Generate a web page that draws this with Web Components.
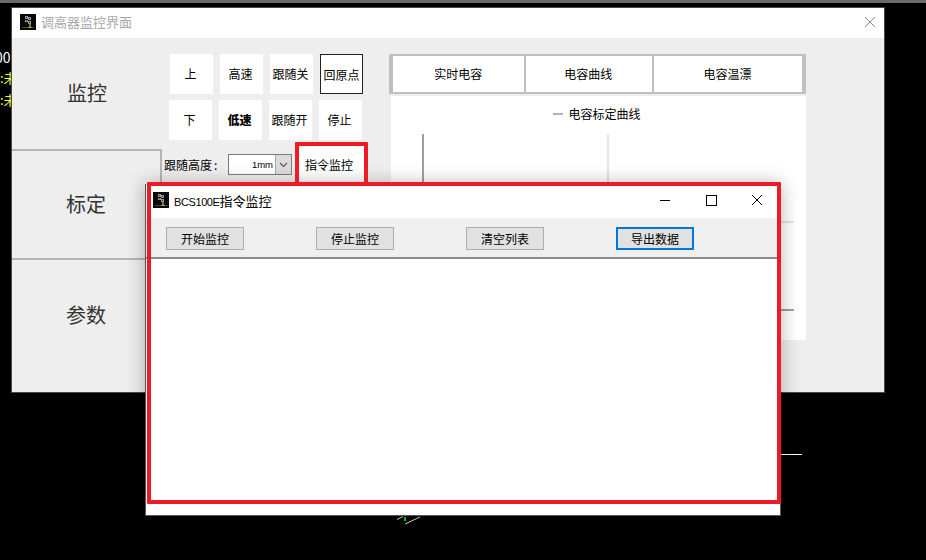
<!DOCTYPE html>
<html lang="zh-CN">
<head>
<meta charset="utf-8">
<title>调高器监控界面</title>
<style>
html,body{margin:0;padding:0;background:#000;}
body{font:12px "Noto Sans CJK SC","Liberation Sans",sans-serif;color:#000;width:926px;height:560px;overflow:hidden;}
</style>
</head>
<body>
<desk-top>
  <app-window>
    <side-nav slot="nav"></side-nav>
    <control-panel slot="controls"></control-panel>
    <chart-panel slot="chart"></chart-panel>
  </app-window>
  <monitor-dialog></monitor-dialog>
  <red-mark style="left:295px;top:142px;width:73px;height:44px"></red-mark>
  <red-mark style="left:147px;top:182px;width:634px;height:322px"></red-mark>
</desk-top>
<script>
const FONT='"Noto Sans CJK SC","Liberation Sans",sans-serif';
function def(name,html){
  customElements.define(name,class extends HTMLElement{
    constructor(){super();this.attachShadow({mode:'open'}).innerHTML=html;}
  });
}
def('app-icon',`<style>:host{display:block;width:16px;height:16px;flex:none}svg{display:block}</style>
<svg width="16" height="16" viewBox="0 0 16 16" shape-rendering="crispEdges"><rect width="16" height="16" fill="#0a0a0a"/>
<path d="M5 2h3v3H5zM8 3h3v3H8zM5 6h3v2H5zM8 7h3v3H8z" fill="#9a9a9a"/>
<path d="M6 3h1v1H6zM9 4h1v1H9zM6 6h1v1H6zM9 8h1v1H9z" fill="#2a2a2a"/>
<path d="M9 10h2v3H9z" fill="#77773a"/>
<path d="M2 13h12v1H2z" fill="#4a4a28"/>
<path d="M8 13h4v1H8z" fill="#a8a030"/></svg>`);

def('desk-top',`<style>
:host{display:block;position:relative;width:926px;height:560px;background:#000;overflow:hidden}
.top{height:3px;background:#6a6a6a}
.strip{position:absolute;left:0;top:46px;width:11px;overflow:hidden;display:flex;flex-direction:column;font:14px/22px ${FONT};color:#fff;white-space:nowrap}
.w{margin-left:-5px}
.y{color:#f4f430;font-size:13px}
.y1{margin-top:-1px}
svg{position:absolute;left:0;top:0}
</style>
<div class="top"></div>
<div class="strip"><span class="w">00</span><span class="y y1">:未</span><span class="y">:未</span></div>
<svg width="926" height="560" fill="none">
<path d="M781 454.5h21" stroke="#fff"/>
<path d="M397 519.5l6-3M405 524l15-7" stroke="#ddd"/>
<path d="M405 517v4" stroke="#0c0" stroke-width="2"/>
</svg>
<slot></slot>`);

def('app-window',`<style>
:host{display:block;position:absolute;left:11px;top:7px;width:872px;height:384px;border:1px solid #4a4a4a;background:#eee;font:12px ${FONT}}
.title{height:30px;box-sizing:border-box;padding:0 8px 2px 8px;background:#fff;display:flex;align-items:center;gap:5px;color:#a8a8a8;font-size:13px}
.title span{flex:1;position:relative;top:-1px}
.body{height:354px;display:grid;grid-template-columns:150px 227px 417px 1fr}
svg{display:block}
</style>
<div class="title"><app-icon></app-icon><span>调高器监控界面</span>
<svg width="12" height="12" viewBox="0 0 12 12" fill="none" stroke="#8a8a8a"><path d="M1 1l10 10M11 1L1 11"/></svg></div>
<div class="body"><slot name="nav"></slot><slot name="controls"></slot><slot name="chart"></slot><div></div></div>`);

def('side-nav',`<style>
:host{display:grid;grid-template-rows:111px 109px 134px;height:354px;font:20px ${FONT};color:#333}
div{display:flex;align-items:center;justify-content:center;box-sizing:border-box;padding-bottom:2px}
.b{border-top:2px solid #b5b5b5;border-right:2px solid #b5b5b5}
.l{padding-bottom:23px}
</style>
<div>监控</div><div class="b">标定</div><div class="b l">参数</div>`);

def('tool-btn',`<style>
:host{display:flex;align-items:center;justify-content:center;box-sizing:border-box;width:43px;height:40px;padding:0 2px 1px 0;background:#fff;font:12px ${FONT};color:#000;white-space:nowrap}
:host([active]){border:1.5px solid #222;padding:0}
:host([strong]){font-weight:900}
:host(.cmd){padding:2px 4px 0 0}
</style><slot></slot>`);

def('control-panel',`<style>
:host{display:block;padding:16px 0 0 8px;box-sizing:border-box;font:12px ${FONT}}
.row{display:flex;gap:7px}
.r2{margin:6px 0 0 -1px}
.r3{margin:5px 0 0 -6px;display:flex;align-items:flex-start}
.r3 label{width:64px;margin-top:10px;line-height:20px}
.r3 label b{font-weight:400;margin-left:2px}
.sel{width:64px;height:21px;margin-top:9px;box-sizing:border-box;border:1px solid #7a7a7a;background:#fff;display:flex;font:9.5px/19px "Liberation Sans",sans-serif}
.sel span{flex:1;text-align:right;padding-right:2px}
.sel i{width:15px;background:#dcdcdc;border-left:1px solid #a8a8a8;display:flex;align-items:center;justify-content:center}
.cmd{width:66px;height:35px;margin:1px 0 0 6px}
</style>
<div class="row"><tool-btn>上</tool-btn><tool-btn>高速</tool-btn><tool-btn>跟随关</tool-btn><tool-btn active>回原点</tool-btn></div>
<div class="row r2"><tool-btn>下</tool-btn><tool-btn strong>低速</tool-btn><tool-btn>跟随开</tool-btn><tool-btn>停止</tool-btn></div>
<div class="r3"><label>跟随高度<b>:</b></label>
<div class="sel"><span>1mm</span><i><svg width="9" height="6" fill="none" stroke="#555" stroke-width="1.1"><path d="M1 1l3.5 3.5L8 1"/></svg></i></div>
<tool-btn class="cmd">指令监控</tool-btn></div>`);

def('chart-panel',`<style>
:host{display:block;padding-top:16px;font:12px ${FONT}}
.tabs{height:36px;border:solid #c0c0c0;border-width:2px 4px;display:grid;grid-template-columns:130.5px 2px 126.5px 2px 1fr;background:#fff}
.tabs span{display:flex;align-items:center;justify-content:center;padding:0 1px 2px 0}
.tabs span:first-child{padding-right:0}
.tabs i{background:#c0c0c0}
.plot{position:relative;margin:2px 0 0 2px;height:244px;background:#fff}
.leg{display:flex;justify-content:center;align-items:center;gap:5px;height:34px;padding-right:3px}
.leg i{width:10px;height:2px;margin-top:2px;background:#a0b4d0}
svg{position:absolute;left:0;top:0}
</style>
<div class="tabs"><span>实时电容</span><i></i><span>电容曲线</span><i></i><span>电容温漂</span></div>
<div class="plot"><div class="leg"><i></i><span>电容标定曲线</span></div>
<svg width="415" height="244" fill="none">
<path d="M217 38v176M32 126h371" stroke="#dcdcdc" stroke-width="1.5"/>
<path d="M32 38v176h371" stroke="#808080" stroke-width="1.5"/>
</svg></div>`);

def('win-btn',`<style>
:host{display:block;box-sizing:border-box;width:78px;height:23px;background:#e1e1e1;border:1px solid #adadad;font:12px/21px ${FONT};text-align:center;color:#000}
:host([focus]){border:2px solid #0078d7;line-height:19px}
</style><slot></slot>`);

def('monitor-dialog',`<style>
:host{display:block;position:absolute;left:145px;top:184px;width:634px;height:331px;background:#fff;border:solid #555;border-width:0 1px 1px 1px;box-shadow:0 0 18px rgba(0,0,0,.3);font:12px ${FONT}}
.title{height:34px;display:flex;align-items:center;padding-left:7px;gap:5px;font-size:13px;position:relative;top:-1px}
.title b{font:11px "Liberation Sans",sans-serif;letter-spacing:-.4px}
.title span{flex:1}
.ctl{display:flex;align-items:center}
.ctl svg{display:block;width:46px}
.tools{background:#efefef;border-bottom:2px solid #8c8c8c;display:flex;gap:72px;padding:9px 0 0 20px;box-sizing:border-box;height:41px}
</style>
<div class="title"><app-icon></app-icon><span><b>BCS100E</b>指令监控</span>
<div class="ctl">
<svg height="12" viewBox="0 0 46 12" fill="none" stroke="#000"><path d="M18 6.500h10"/></svg>
<svg height="12" viewBox="0 0 46 12" fill="none" stroke="#000"><rect x="18.500" y="1.500" width="10" height="10"/></svg>
<svg height="12" viewBox="0 0 46 12" fill="none" stroke="#000"><path d="M18 1l10 10M28 1L18 11"/></svg>
</div></div>
<div class="tools"><win-btn>开始监控</win-btn><win-btn>停止监控</win-btn><win-btn>清空列表</win-btn><win-btn focus>导出数据</win-btn></div>`);

def('red-mark',`<style>:host{display:block;position:absolute;box-sizing:border-box;border:4px solid #ed1c24;border-radius:1px;pointer-events:none}</style>`);
</script>
</body>
</html>
